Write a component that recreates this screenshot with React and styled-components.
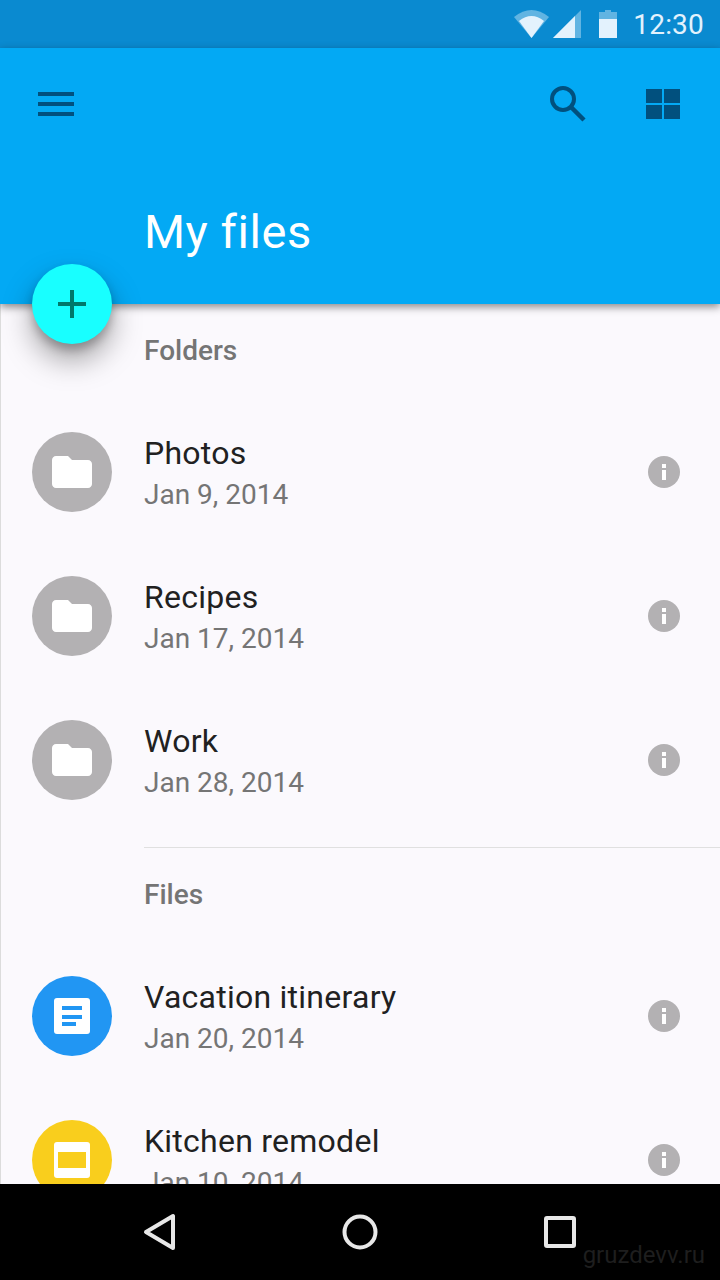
import React from 'react';
import styled, { createGlobalStyle } from 'styled-components';

const GlobalStyle = createGlobalStyle`
   html, body {
      margin: 0;
      padding: 0;
      background: #000;
      font-family: Roboto, "Liberation Sans", sans-serif;
   }
`;

const Screen = styled.div`
   position: relative;
   display: flex;
   flex-direction: column;
   width: 720px;
   height: 1280px;
   overflow: hidden;
   background: #fbf9fd;
`;

const StatusBar = styled.div`
   display: flex;
   align-items: center;
   justify-content: flex-end;
   flex: none;
   height: 48px;
   padding-right: 16px;
   background: #0a8ad0;
   color: #e3f2fd;
`;

const StatusIcon = styled.svg`
   display: block;
   flex: none;
   margin-right: ${(p) => p.$gap}px;
`;

const Clock = styled.span`
   padding-top: 2px;
   font-size: 28px;
   line-height: 46px;
   letter-spacing: 0.2px;
`;

const AppBar = styled.header`
   position: relative;
   z-index: 1;
   flex: none;
   height: 256px;
   background: #03a9f4;
   box-shadow: 0 3px 8px rgba(0, 0, 0, 0.45);
`;

const Toolbar = styled.div`
   display: flex;
   align-items: center;
   justify-content: space-between;
   height: 112px;
   padding: 0 33px 0 32px;
`;

const ToolGroup = styled.div`
   display: flex;
   gap: 47px;
`;

const ToolButton = styled.div`
   display: flex;
   align-items: center;
   justify-content: center;
   width: 48px;
   height: 48px;
`;

const Title = styled.h1`
   margin: 0;
   padding: 40px 0 0 144px;
   font-size: 47px;
   line-height: 64px;
   font-weight: 400;
   letter-spacing: 0.55px;
   color: #fff;
`;

const Fab = styled.div`
   position: absolute;
   z-index: 2;
   left: 32px;
   top: 264px;
   display: flex;
   align-items: center;
   justify-content: center;
   width: 80px;
   height: 80px;
   border-radius: 50%;
   background: #18ffff;
   box-shadow: 0 16px 30px rgba(0, 0, 0, 0.36), 0 6px 10px rgba(0, 0, 0, 0.22);
`;

const Content = styled.main`
   flex: 1;
   min-height: 0;
   overflow: hidden;
   border-left: 1px solid #dcdcdc;
`;

const SectionLabel = styled.div`
   height: 96px;
   padding-left: 143px;
   font-size: 28px;
   line-height: 94px;
   font-weight: 500;
   color: #757575;
`;

const Row = styled.div`
   display: flex;
   align-items: center;
   height: 144px;
   padding: 0 40px 0 31px;
`;

const Avatar = styled.div`
   display: flex;
   align-items: center;
   justify-content: center;
   flex: none;
   width: 80px;
   height: 80px;
   margin-right: 32px;
   border-radius: 50%;
   background: ${(p) => p.$color};
`;

const RowText = styled.div`
   flex: 1;
   min-width: 0;
   padding-top: 4px;
`;

const RowTitle = styled.div`
   font-size: 32px;
   line-height: 41px;
   letter-spacing: 0.25px;
   color: #212121;
`;

const RowDate = styled.div`
   font-size: 28px;
   line-height: 41px;
   color: #757575;
`;

const Divider = styled.hr`
   height: 1px;
   margin: 15px 0 0 143px;
   border: 0;
   background: #e0e0e0;
`;

const NavBar = styled.nav`
   position: relative;
   display: flex;
   align-items: center;
   justify-content: center;
   flex: none;
   height: 96px;
   background: #000;
`;

const NavButton = styled.div`
   display: flex;
   align-items: center;
   justify-content: center;
   width: 200px;
`;

const Watermark = styled.span`
   position: absolute;
   right: 15px;
   top: 57px;
   font-size: 24px;
   line-height: 28px;
   color: #1e1e1e;
`;

const FolderIcon = () => (
   <svg width="48" height="48" viewBox="0 0 24 24">
      <path fill="#fff" d="M10 4H4c-1.1 0-2 .9-2 2v12c0 1.1.9 2 2 2h16c1.1 0 2-.9 2-2V8c0-1.1-.9-2-2-2h-8l-2-2z" />
   </svg>
);

const DocIcon = () => (
   <svg width="36" height="36" viewBox="0 0 36 36">
      <rect width="36" height="36" rx="3" fill="#fff" />
      <path fill="#2196f3" d="M8 8h20v4H8zM8 17h20v4H8zM8 24h14v4H8z" />
   </svg>
);

const SlidesIcon = () => (
   <svg width="36" height="36" viewBox="0 0 36 36">
      <rect width="36" height="36" rx="3" fill="#fff" />
      <rect x="4" y="10" width="28" height="16" fill="#f9ce1d" />
   </svg>
);

const InfoIcon = () => (
   <svg width="32" height="32" viewBox="0 0 32 32">
      <circle cx="16" cy="16" r="16" fill="#b3b1b3" />
      <path fill="#fff" d="M14 8h4v4h-4zM14 14h4v10h-4z" />
   </svg>
);

const folders = [
   { name: 'Photos', date: 'Jan 9, 2014' },
   { name: 'Recipes', date: 'Jan 17, 2014' },
   { name: 'Work', date: 'Jan 28, 2014' },
];

const files = [
   { name: 'Vacation itinerary', date: 'Jan 20, 2014', color: '#2196f3', Icon: DocIcon },
   { name: 'Kitchen remodel', date: 'Jan 10, 2014', color: '#f9ce1d', Icon: SlidesIcon },
];

const ListRow = ({ name, date, color, Icon }) => (
   <Row>
      <Avatar $color={color}>
         <Icon />
      </Avatar>
      <RowText>
         <RowTitle>{name}</RowTitle>
         <RowDate>{date}</RowDate>
      </RowText>
      <InfoIcon />
   </Row>
);

const App = () => {
   return (
      <Screen>
         <GlobalStyle />
         <StatusBar>
            <StatusIcon $gap={4} width="35" height="28" viewBox="0 0 35 28">
               <path fill="#e3f2fd" opacity="0.4" d="M17.5 28L0 7Q17.5-7 35 7z" />
               <path fill="#e3f2fd" d="M17.5 28L5 11Q17.5 1 30 11z" />
            </StatusIcon>
            <StatusIcon $gap={18} width="28" height="28" viewBox="0 0 28 28">
               <path fill="#e3f2fd" opacity="0.4" d="M0 28L28 0v28z" />
               <path fill="#e3f2fd" d="M0 28L22 6v22z" />
            </StatusIcon>
            <StatusIcon $gap={16} width="18" height="28" viewBox="0 0 18 28">
               <path fill="#e3f2fd" opacity="0.4" d="M6 0h6v2h6v8H0V2h6z" />
               <path fill="#e3f2fd" d="M0 9h18v19H0z" />
            </StatusIcon>
            <Clock>12:30</Clock>
         </StatusBar>
         <AppBar>
            <Toolbar>
               <ToolButton>
                  <svg width="36" height="24" viewBox="0 0 36 24">
                     <path fill="#01507e" d="M0 0h36v4H0zM0 10h36v4H0zM0 20h36v4H0z" />
                  </svg>
               </ToolButton>
               <ToolGroup>
                  <ToolButton>
                     <svg width="36" height="36" viewBox="0 0 36 36">
                        <circle cx="13" cy="13" r="11" fill="none" stroke="#01507e" strokeWidth="4" />
                        <path d="M21 21l13 13" stroke="#01507e" strokeWidth="4.5" />
                     </svg>
                  </ToolButton>
                  <ToolButton>
                     <svg width="34" height="30" viewBox="0 0 34 30">
                        <path fill="#01507e" d="M0 0h16v14H0zM18 0h16v14H18zM0 16h16v14H0zM18 16h16v14H18z" />
                     </svg>
                  </ToolButton>
               </ToolGroup>
            </Toolbar>
            <Title>My files</Title>
         </AppBar>
         <Fab>
            <svg width="28" height="28" viewBox="0 0 28 28">
               <path fill="#00796b" d="M12 0h4v12h12v4H16v12h-4V16H0v-4h12z" />
            </svg>
         </Fab>
         <Content>
            <SectionLabel>Folders</SectionLabel>
            {folders.map((item) => (
               <ListRow key={item.name} {...item} color="#b3b1b3" Icon={FolderIcon} />
            ))}
            <Divider />
            <SectionLabel>Files</SectionLabel>
            {files.map((item) => (
               <ListRow key={item.name} {...item} />
            ))}
         </Content>
         <NavBar>
            <NavButton>
               <svg width="36" height="40" viewBox="0 0 36 40">
                  <path d="M31 4v32L4 20z" fill="none" stroke="#e8e8e8" strokeWidth="4" strokeLinejoin="round" />
               </svg>
            </NavButton>
            <NavButton>
               <svg width="36" height="36" viewBox="0 0 36 36">
                  <circle cx="18" cy="18" r="15.5" fill="none" stroke="#e8e8e8" strokeWidth="4" />
               </svg>
            </NavButton>
            <NavButton>
               <svg width="32" height="32" viewBox="0 0 32 32">
                  <rect x="2" y="2" width="28" height="28" rx="1" fill="none" stroke="#e8e8e8" strokeWidth="4" />
               </svg>
            </NavButton>
            <Watermark>gruzdevv.ru</Watermark>
         </NavBar>
      </Screen>
   );
};

export default App;
